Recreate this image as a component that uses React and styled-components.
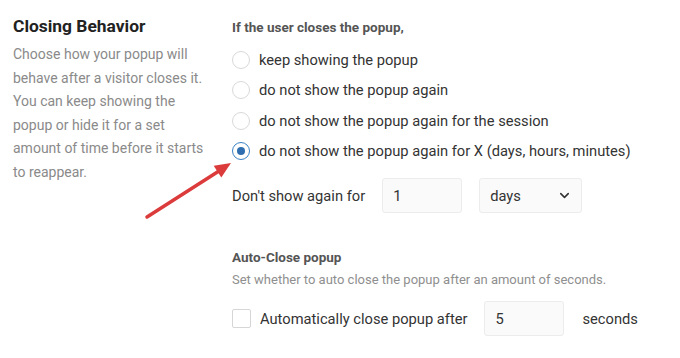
import React from 'react';
import styled, { createGlobalStyle } from 'styled-components';
import { ChevronDown } from 'lucide-react';

const GlobalStyle = createGlobalStyle`
  body {
    margin: 0;
    background: #fff;
    font-family: Roboto, 'Liberation Sans', sans-serif;
  }
`;

const Page = styled.div`
  position: relative;
  width: 680px;
  height: 358px;
  overflow: hidden;
  display: flex;
  padding-left: 13px;
  box-sizing: border-box;
`;

const SideColumn = styled.div`
  width: 200px;
  padding-top: 14px;
  margin-right: 19px;
`;

const Title = styled.h2`
  margin: 0;
  font-size: 17.4px;
  line-height: 24px;
  font-weight: 700;
  color: #222;
`;

const SideText = styled.p`
  margin: 5px 0 0;
  font-size: 14px;
  line-height: 23.5px;
  color: #8a8a8a;
`;

const MainColumn = styled.div`
  flex: 1;
  padding-top: 17px;
  display: flex;
  flex-direction: column;
`;

const SectionHeading = styled.div`
  font-size: 13.5px;
  line-height: 20px;
  font-weight: 700;
  color: #555;
  margin-top: ${(props) => props.$top || 0}px;
`;

const SectionHint = styled.div`
  margin-top: 3px;
  font-size: 13px;
  line-height: 20px;
  color: #8f8f8f;
`;

const RadioList = styled.div`
  margin-top: 8px;
  display: flex;
  flex-direction: column;
`;

const OptionRow = styled.label`
  height: 30.3px;
  display: flex;
  align-items: center;
  gap: 9px;
  font-size: 14.7px;
  color: #333;
`;

const RadioCircle = styled.span`
  width: 18px;
  height: 18px;
  box-sizing: border-box;
  border-radius: 50%;
  border: ${(props) => (props.$checked ? '1.5px solid #3b82c4' : '1px solid #d9d9d9')};
  background: #fff;
  display: flex;
  align-items: center;
  justify-content: center;

  &::after {
    content: '';
    width: 8px;
    height: 8px;
    border-radius: 50%;
    background: ${(props) => (props.$checked ? '#2e6db0' : 'transparent')};
  }
`;

const Checkbox = styled.span`
  width: 19px;
  height: 19px;
  box-sizing: border-box;
  border: 1px solid #d6d6d6;
  border-radius: 2px;
  background: #fff;
  margin-right: 9px;
`;

const FieldRow = styled.div`
  display: flex;
  align-items: center;
  margin-top: ${(props) => props.$top}px;
  font-size: 14.7px;
  color: #333;
`;

const FieldLabel = styled.span`
  margin-right: ${(props) => props.$gap}px;
`;

const TextBox = styled.div`
  width: ${(props) => props.$width}px;
  height: 35px;
  box-sizing: border-box;
  border: 1px solid #ececec;
  border-radius: 3px;
  background: #fafafa;
  display: flex;
  align-items: center;
  justify-content: space-between;
  padding: 0 9px 0 10px;
  margin-right: ${(props) => props.$gap || 0}px;
  font-size: 14.7px;
  color: #333;
`;

const Arrow = styled.svg`
  position: absolute;
  left: 0;
  top: 0;
  pointer-events: none;
`;

const options = [
  'keep showing the popup',
  'do not show the popup again',
  'do not show the popup again for the session',
  'do not show the popup again for X (days, hours, minutes)',
];

const App = () => {
  return (
    <>
      <GlobalStyle />
      <Page>
        <SideColumn>
          <Title>Closing Behavior</Title>
          <SideText>
            Choose how your popup will behave after a visitor closes it. You
            can keep showing the popup or hide it for a set amount of time
            before it starts to reappear.
          </SideText>
        </SideColumn>
        <MainColumn>
          <SectionHeading>If the user closes the popup,</SectionHeading>
          <RadioList>
            {options.map((text, i) => (
              <OptionRow key={text}>
                <RadioCircle $checked={i === 3} />
                {text}
              </OptionRow>
            ))}
          </RadioList>
          <FieldRow $top={12}>
            <FieldLabel $gap={17}>Don't show again for</FieldLabel>
            <TextBox $width={80} $gap={17}>1</TextBox>
            <TextBox $width={103}>
              days
              <ChevronDown size={15} strokeWidth={2.5} color="#333" />
            </TextBox>
          </FieldRow>
          <SectionHeading $top={34}>Auto-Close popup</SectionHeading>
          <SectionHint>
            Set whether to auto close the popup after an amount of seconds.
          </SectionHint>
          <FieldRow $top={11}>
            <Checkbox />
            <FieldLabel $gap={17}>Automatically close popup after</FieldLabel>
            <TextBox $width={80} $gap={18}>5</TextBox>
            seconds
          </FieldRow>
        </MainColumn>
        <Arrow width="680" height="358">
          <line
            x1="147"
            y1="217"
            x2="219"
            y2="171"
            stroke="#dc3b3b"
            strokeWidth="3.5"
            strokeLinecap="round"
          />
          <polygon points="231,163 221.3,177.6 213.7,165.8" fill="#dc3b3b" />
        </Arrow>
      </Page>
    </>
  );
};

export default App;
